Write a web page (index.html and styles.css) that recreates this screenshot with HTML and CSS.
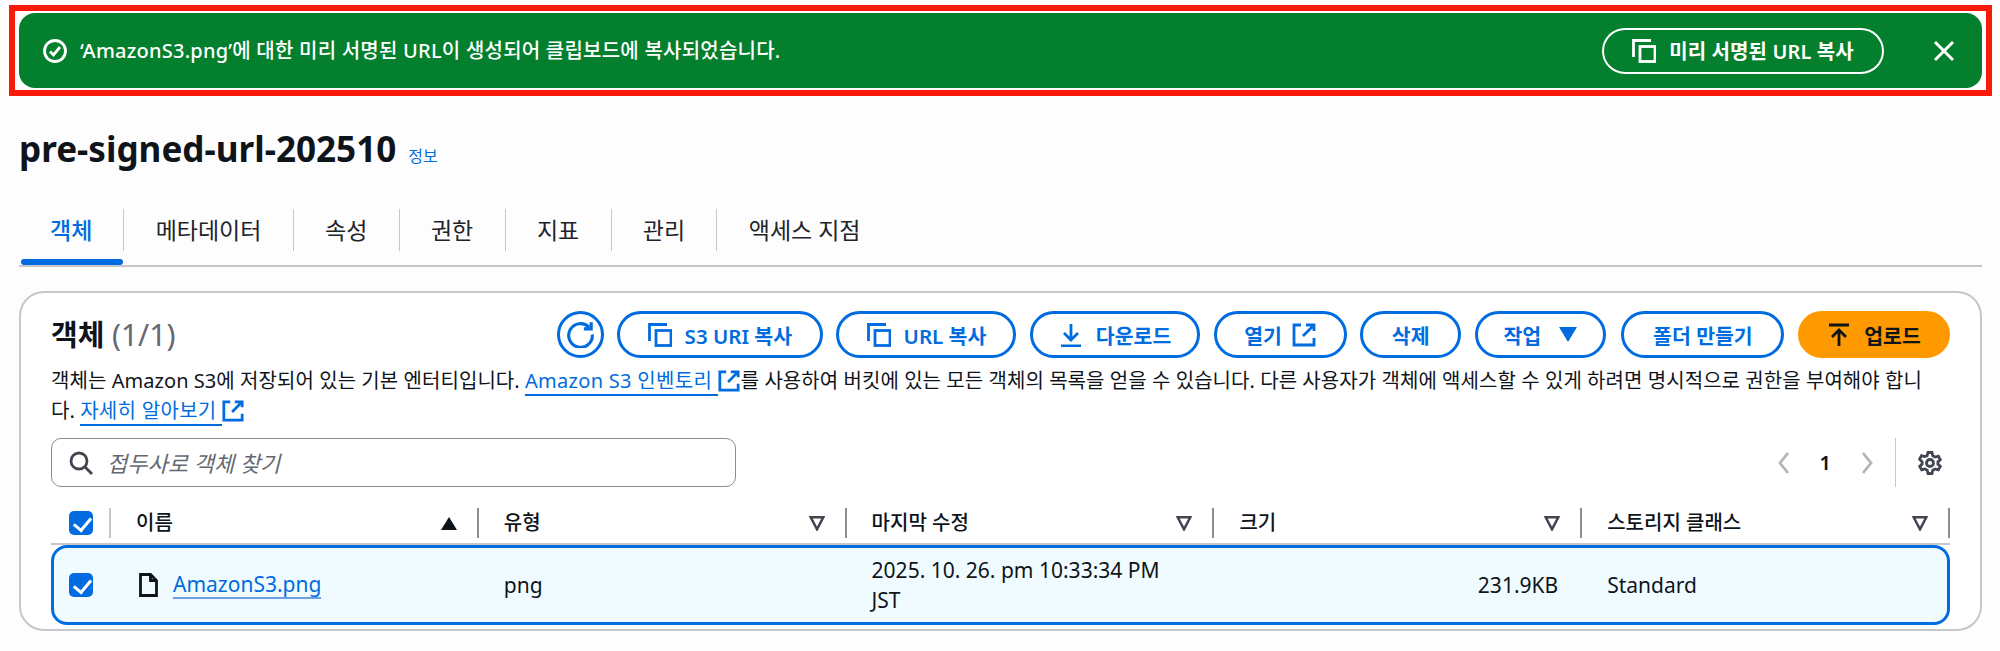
FILE: index.html
```html
<!DOCTYPE html>
<html lang="ko">
<head>
    <meta charset="UTF-8">
    <meta name="viewport" content="width=device-width, initial-scale=1.0">
    <title>pre-signed-url-202510</title>
    <link rel="stylesheet" href="styles.css">
</head>
<body>
    <svg class="sprite" width="0" height="0" aria-hidden="true">
        <symbol id="i-copy" viewBox="0 0 24 24"><path d="M1.500 18V1.500H19"/><rect x="8" y="7.500" width="15" height="15"/></symbol>
        <symbol id="i-external" viewBox="0 0 24 24"><path d="M9 2H2v20h20v-7M22 8V2h-8M22 2L11 13"/></symbol>
        <symbol id="i-refresh" viewBox="0 0 24 24"><path d="M19.500 5.500A10.500 10.500 0 1 0 22.500 12M21.500 1v6h-6.500"/></symbol>
        <symbol id="i-download" viewBox="0 0 24 24"><path d="M12 1v15M5 10l7 7 7-7M2 23h20"/></symbol>
        <symbol id="i-upload" viewBox="0 0 24 24"><path d="M2 2h20M12 23V8M5 14l7-7 7 7"/></symbol>
        <symbol id="i-close" viewBox="0 0 24 24"><path d="M3 3l18 18M21 3L3 21"/></symbol>
        <symbol id="i-success" viewBox="0 0 24 24"><circle cx="12" cy="12" r="10.500"/><path d="M7 12.500l3.500 3.500L17 8"/></symbol>
        <symbol id="i-search" viewBox="0 0 24 24"><circle cx="10" cy="10" r="8"/><path d="M16 16l7 7"/></symbol>
        <symbol id="i-file" viewBox="0 0 19 24"><path d="M1.500 1.500h10l6 6v15h-16zM11.500 1.500v6h6"/></symbol>
        <symbol id="i-gear" viewBox="0 0 24 24"><circle cx="12" cy="12" r="3.500"/><path d="M10 1.500h4l.8 3.300 2.300 1.300 3.200-1 2 3.500-2.400 2.300v2.200l2.400 2.300-2 3.500-3.200-1-2.300 1.300-.8 3.300h-4l-.8-3.300-2.300-1.300-3.200 1-2-3.500 2.400-2.300v-2.200L1.500 8.100l2-3.500 3.200 1L9 4.800z"/></symbol>
        <symbol id="i-left" viewBox="0 0 12 24"><path d="M10 2L2 12l8 10"/></symbol>
        <symbol id="i-right" viewBox="0 0 12 24"><path d="M2 2l8 10-8 10"/></symbol>
    </svg>

    <div class="flash-frame">
        <div class="flash">
            <svg class="icon flash-icon"><use href="#i-success"/></svg>
            <span class="flash-text">‘AmazonS3.png’에 대한 미리 서명된 URL이 생성되어 클립보드에 복사되었습니다.</span>
            <button class="flash-btn"><svg class="icon btn-icon"><use href="#i-copy"/></svg>미리 서명된 URL 복사</button>
            <svg class="icon flash-close"><use href="#i-close"/></svg>
        </div>
    </div>

    <main class="page">
        <div class="title-row">
            <h1>pre-signed-url-202510</h1>
            <a class="info-link">정보</a>
        </div>

        <nav class="tabs">
            <a class="tab active">객체</a>
            <a class="tab">메타데이터</a>
            <a class="tab">속성</a>
            <a class="tab">권한</a>
            <a class="tab">지표</a>
            <a class="tab">관리</a>
            <a class="tab">액세스 지점</a>
        </nav>

        <section class="card">
            <div class="card-head">
                <h2>객체 <span class="count">(1/1)</span></h2>
                <div class="actions">
                    <button class="btn btn-round"><svg class="icon refresh-icon"><use href="#i-refresh"/></svg></button>
                    <button class="btn w-s3"><svg class="icon btn-icon"><use href="#i-copy"/></svg>S3 URI 복사</button>
                    <button class="btn w-url"><svg class="icon btn-icon"><use href="#i-copy"/></svg>URL 복사</button>
                    <button class="btn w-down"><svg class="icon btn-icon"><use href="#i-download"/></svg>다운로드</button>
                    <button class="btn w-open">열기<svg class="icon btn-icon"><use href="#i-external"/></svg></button>
                    <button class="btn w-del">삭제</button>
                    <button class="btn w-act">작업<span class="caret"></span></button>
                    <button class="btn w-folder">폴더 만들기</button>
                    <button class="btn btn-primary w-up"><svg class="icon btn-icon"><use href="#i-upload"/></svg>업로드</button>
                </div>
            </div>

            <p class="desc">객체는 Amazon S3에 저장되어 있는 기본 엔터티입니다. <a class="ext-link">Amazon S3 인벤토리 </a><svg class="icon ext-icon"><use href="#i-external"/></svg>를 사용하여 버킷에 있는 모든 객체의 목록을 얻을 수 있습니다. 다른 사용자가 객체에 액세스할 수 있게 하려면 명시적으로 권한을 부여해야 합니<br>다. <a class="ext-link">자세히 알아보기 </a><svg class="icon ext-icon"><use href="#i-external"/></svg></p>

            <div class="tools">
                <div class="search">
                    <svg class="icon search-icon"><use href="#i-search"/></svg>
                    <span class="placeholder">접두사로 객체 찾기</span>
                </div>
                <div class="pager">
                    <svg class="icon pager-arrow"><use href="#i-left"/></svg>
                    <span class="page-num">1</span>
                    <svg class="icon pager-arrow"><use href="#i-right"/></svg>
                </div>
                <div class="settings"><svg class="icon gear-icon"><use href="#i-gear"/></svg></div>
            </div>

            <div class="thead">
                <div class="th th-check"><span class="checkbox"></span></div>
                <div class="th">이름<span class="sort-on"></span></div>
                <div class="th">유형<svg class="sort-off" viewBox="0 0 14 14"><path d="M1.500 2h11L7 12.500z"/></svg></div>
                <div class="th">마지막 수정<svg class="sort-off" viewBox="0 0 14 14"><path d="M1.500 2h11L7 12.500z"/></svg></div>
                <div class="th">크기<svg class="sort-off" viewBox="0 0 14 14"><path d="M1.500 2h11L7 12.500z"/></svg></div>
                <div class="th">스토리지 클래스<svg class="sort-off" viewBox="0 0 14 14"><path d="M1.500 2h11L7 12.500z"/></svg></div>
            </div>
            <div class="row">
                <div class="td td-check"><span class="checkbox"></span></div>
                <div class="td td-name"><svg class="icon file-icon"><use href="#i-file"/></svg><a class="file-link">AmazonS3.png</a></div>
                <div class="td">png</div>
                <div class="td">2025. 10. 26. pm 10:33:34 PM<br>JST</div>
                <div class="td td-size">231.9KB</div>
                <div class="td">Standard</div>
            </div>
        </section>
    </main>
</body>
</html>
```

FILE: styles.css
```css
:root {
    --blue: #006ce0;
    --ink: #0f141a;
    --line: #c6c6cd;
    --green: #037f2d;
    --col: 367.8px;
}

* {
    box-sizing: border-box;
}

body {
    margin: 0;
    background-color: #fdfdfd;
    color: var(--ink);
    font-family: "Noto Sans", "Noto Sans CJK KR", sans-serif;
    font-size: 20px;
    line-height: 30px;
    overflow: hidden;
}

h1, h2, p {
    margin: 0;
}

button {
    font-family: inherit;
    cursor: pointer;
}

.sprite {
    position: absolute;
}

.icon {
    display: block;
    flex: none;
    fill: none;
    stroke: currentColor;
    stroke-width: 2.800;
}

/* flash */
.flash-frame {
    margin: 5px 8px 0 9px;
    padding: 2px 4px;
    background: #fff;
    border: 6px solid #fb1a0a;
}

.flash {
    display: flex;
    align-items: center;
    height: 75px;
    padding: 0 26px 0 24px;
    background: var(--green);
    color: #fff;
    border-radius: 16px;
}

.flash-icon {
    width: 24px;
    height: 24px;
    margin-right: 13px;
}

.flash-text {
    flex: 1;
    font-weight: 500;
    letter-spacing: .23px;
}

.flash-btn {
    display: flex;
    align-items: center;
    justify-content: center;
    gap: 13px;
    width: 282px;
    height: 46px;
    margin-right: 48px;
    background: transparent;
    color: #fff;
    border: 2px solid #fff;
    border-radius: 23px;
    font-size: 20px;
    font-weight: 600;
    letter-spacing: .1px;
}

.flash-close {
    width: 24px;
    height: 24px;
    stroke-width: 3;
}

/* heading */
.page {
    padding: 0 10px 0 19px;
    width: 1992px;
}

.title-row {
    display: flex;
    align-items: baseline;
    gap: 12px;
    margin-top: 27px;
    height: 50px;
}

h1 {
    font-size: 35.100px;
    font-weight: 700;
    line-height: 50px;
}

.info-link {
    color: var(--blue);
    font-size: 16px;
}

.tabs {
    display: flex;
    height: 58px;
    margin-top: 36px;
    border-bottom: 2px solid var(--line);
    font-size: 23px;
}

.tab {
    position: relative;
    height: 42px;
    padding: 0 31.300px;
    line-height: 42px;
    border-right: 1px solid var(--line);
    color: #1f242b;
}

.tab:last-child {
    border-right: 0;
}

.tab.active {
    color: var(--blue);
    font-weight: 500;
    margin-left: 2px;
    padding: 0 31px 0 29px;
}

.tab.active::after {
    content: "";
    position: absolute;
    left: 0;
    right: 0;
    top: 50px;
    height: 6px;
    background: var(--blue);
    border-radius: 4px;
}

/* card */
.card {
    margin-top: 24px;
    height: 340px;
    padding: 18px 30px 0;
    background: #fff;
    border: 2px solid var(--line);
    border-radius: 25px;
}

.card-head {
    display: flex;
    justify-content: space-between;
    align-items: center;
    height: 47px;
}

h2 {
    font-size: 29px;
    font-weight: 600;
    line-height: 47px;
}

.count {
    color: #656871;
    font-size: 30px;
    font-weight: 400;
}

.actions {
    display: flex;
    gap: 13.600px;
}

.btn {
    display: flex;
    align-items: center;
    justify-content: center;
    gap: 13px;
    height: 47px;
    padding: 0;
    background: #fff;
    color: var(--blue);
    border: 3px solid var(--blue);
    border-radius: 24px;
    font-size: 20.500px;
    font-weight: 600;
}

.btn-round { width: 47px; margin-right: -1px; }
.w-s3 { width: 206px; }
.w-url { width: 180px; }
.w-down { width: 170px; }
.w-open { width: 133px; gap: 10px; }
.w-del { width: 101px; }
.w-act { width: 131px; gap: 18px; }
.w-folder { width: 163px; margin-left: 2px; }
.w-up { width: 152px; }

.btn-primary {
    background: #ff9900;
    border-color: #ff9900;
    color: var(--ink);
}

.btn-icon {
    width: 24px;
    height: 24px;
}

.refresh-icon {
    width: 27px;
    height: 27px;
}

.caret {
    width: 0;
    height: 0;
    border-left: 9px solid transparent;
    border-right: 9px solid transparent;
    border-top: 15px solid var(--blue);
}

.desc {
    margin-top: 8px;
    letter-spacing: .06px;
}

.ext-link {
    color: var(--blue);
    border-bottom: 2px solid var(--blue);
    letter-spacing: .3px;
}

.ext-icon {
    display: inline-block;
    width: 22px;
    height: 22px;
    color: var(--blue);
    vertical-align: -4px;
    margin-right: 1px;
    stroke-width: 3;
}

/* search row */
.tools {
    display: flex;
    align-items: center;
    height: 49px;
    margin-top: 12px;
}

.search {
    display: flex;
    align-items: center;
    gap: 14px;
    width: 685px;
    height: 49px;
    padding-left: 17px;
    border: 1.500px solid #8c8c94;
    border-radius: 10px;
}

.search-icon {
    width: 24px;
    height: 24px;
    color: #424650;
}

.placeholder {
    color: #656871;
    font-size: 22px;
    font-style: italic;
}

.pager {
    display: flex;
    align-items: center;
    gap: 30px;
    margin-left: auto;
    color: #b4b4bb;
}

.pager-arrow {
    width: 12px;
    height: 24px;
}

.page-num {
    color: var(--ink);
    font-weight: 600;
}

.settings {
    display: flex;
    align-items: center;
    justify-content: flex-end;
    width: 55px;
    height: 49px;
    margin-left: 22px;
    padding-right: 8px;
    border-left: 1px solid var(--line);
}

.gear-icon {
    width: 24px;
    height: 24px;
    color: #424650;
}

/* table */
.thead {
    display: grid;
    grid-template-columns: 60px repeat(5, 1fr);
    height: 37px;
    margin-top: 21px;
    padding-bottom: 8px;
    border-bottom: 2px solid var(--line);
}

.th {
    display: flex;
    align-items: center;
    justify-content: space-between;
    padding: 0 20px 0 25px;
    border-right: 2px solid #8c8c94;
    font-weight: 500;
}

.th-check {
    padding: 0 0 0 18px;
    border-right-color: var(--line);
}

.checkbox {
    position: relative;
    display: block;
    width: 24px;
    height: 24px;
    background: var(--blue);
    border-radius: 5px;
}

.checkbox::after {
    content: "";
    position: absolute;
    left: 8px;
    top: 3px;
    width: 8px;
    height: 14px;
    border: solid #fff;
    border-width: 0 3px 3px 0;
    transform: rotate(40deg);
}

.sort-on {
    width: 0;
    height: 0;
    border-left: 8px solid transparent;
    border-right: 8px solid transparent;
    border-bottom: 13px solid var(--ink);
}

.sort-off {
    width: 16px;
    height: 16px;
    fill: none;
    stroke: #424650;
    stroke-width: 2.200;
}

.row {
    display: grid;
    grid-template-columns: 57px repeat(4, var(--col)) 1fr;
    align-items: center;
    height: 80px;
    background: #f0fbff;
    border: 3px solid var(--blue);
    border-radius: 16px;
    font-size: 21px;
}

.td {
    padding-left: 25px;
}

.td-check {
    padding-left: 15px;
}

.td-name {
    display: flex;
    align-items: center;
    gap: 15px;
    padding-left: 28px;
}

.file-icon {
    width: 19px;
    height: 24px;
    color: var(--ink);
}

.file-link {
    color: var(--blue);
    border-bottom: 2px solid #6c9fe6;
    line-height: 26px;
}

.td-size {
    padding: 0 24px 0 0;
    text-align: right;
}
```
